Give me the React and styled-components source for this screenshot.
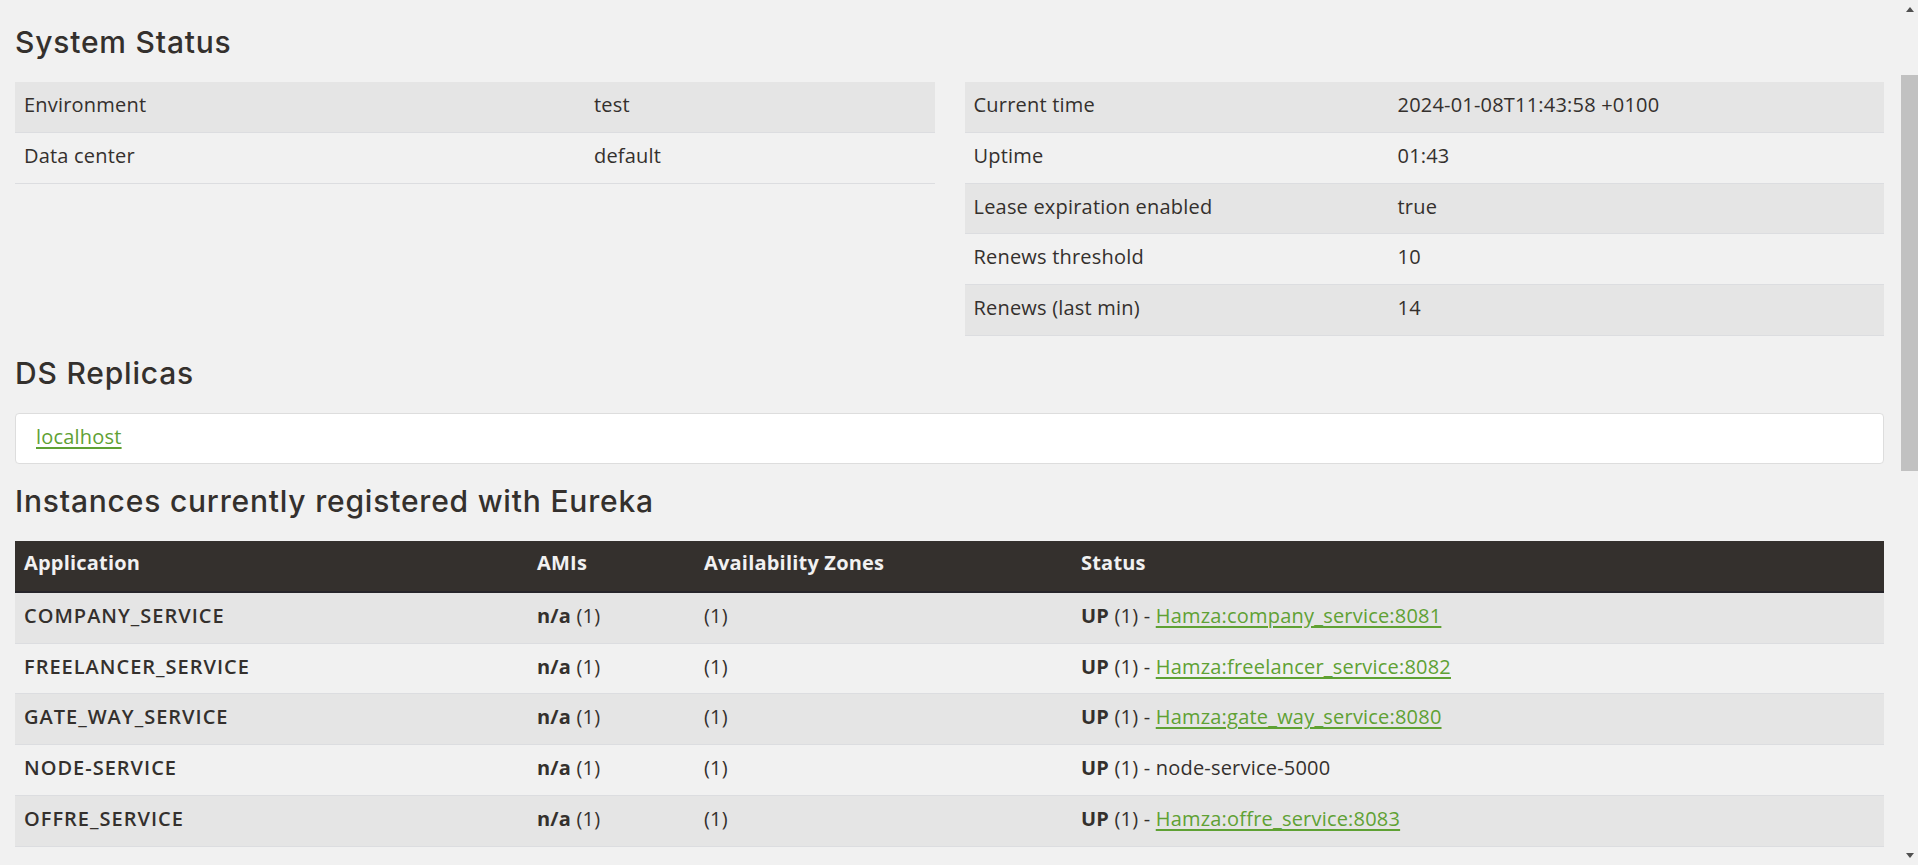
import styled, { createGlobalStyle } from "styled-components";

const systemLeft = [
  ["Environment", "test"],
  ["Data center", "default"],
];

const systemRight = [
  ["Current time", "2024-01-08T11:43:58 +0100"],
  ["Uptime", "01:43"],
  ["Lease expiration enabled", "true"],
  ["Renews threshold", "10"],
  ["Renews (last min)", "14"],
];

const instances = [
  { app: "COMPANY_SERVICE", link: "Hamza:company_service:8081" },
  { app: "FREELANCER_SERVICE", link: "Hamza:freelancer_service:8082" },
  { app: "GATE_WAY_SERVICE", link: "Hamza:gate_way_service:8080" },
  { app: "NODE-SERVICE", text: "node-service-5000" },
  { app: "OFFRE_SERVICE", link: "Hamza:offre_service:8083" },
];

const App = () => {
  return (
    <>
      <GlobalStyle />
      <Page>
        <Main>
          <Title>System Status</Title>
          <Columns>
            <KeyValueTable rows={systemLeft} keyWidth="570px" />
            <KeyValueTable rows={systemRight} keyWidth="424px" />
          </Columns>

          <Title>DS Replicas</Title>
          <ReplicaList>
            <ReplicaItem>
              <Link href="#">localhost</Link>
            </ReplicaItem>
          </ReplicaList>

          <Title>Instances currently registered with Eureka</Title>
          <Table>
            <colgroup>
              <Col $w="513px" />
              <Col $w="167px" />
              <Col $w="377px" />
              <Col />
            </colgroup>
            <thead>
              <tr>
                <HeadCell>Application</HeadCell>
                <HeadCell>AMIs</HeadCell>
                <HeadCell>Availability Zones</HeadCell>
                <HeadCell>Status</HeadCell>
              </tr>
            </thead>
            <tbody>
              {instances.map((it) => (
                <Row key={it.app}>
                  <Cell>
                    <AppName>{it.app}</AppName>
                  </Cell>
                  <Cell>
                    <b>n/a</b> (1)
                  </Cell>
                  <Cell>(1)</Cell>
                  <Cell>
                    <b>UP</b> (1) -{" "}
                    {it.link ? <Link href="#">{it.link}</Link> : it.text}
                  </Cell>
                </Row>
              ))}
            </tbody>
          </Table>
        </Main>

        <Scrollbar aria-hidden="true">
          <ScrollButton>
            <Arrow $dir="up" />
          </ScrollButton>
          <Track>
            <Thumb />
          </Track>
          <ScrollButton>
            <Arrow $dir="down" />
          </ScrollButton>
        </Scrollbar>
      </Page>
    </>
  );
};

const KeyValueTable = ({ rows, keyWidth }) => (
  <Table>
    <colgroup>
      <Col $w={keyWidth} />
      <Col />
    </colgroup>
    <tbody>
      {rows.map(([k, v]) => (
        <Row key={k}>
          <Cell>{k}</Cell>
          <Cell>{v}</Cell>
        </Row>
      ))}
    </tbody>
  </Table>
);

export default App;

const GlobalStyle = createGlobalStyle`
  html, body {
    margin: 0;
    padding: 0;
    background: #f1f1f1;
    overflow: hidden;
  }
`;

const Page = styled.div`
  display: flex;
  height: 100vh;
  overflow: hidden;
  background: #f1f1f1;
  color: #34302d;
  font-family: "Open Sans", "Noto Sans", sans-serif;
  font-size: 20px;
  letter-spacing: 0.2px;
`;

const Main = styled.main`
  flex: 1;
  min-width: 0;
  padding: 5px 17px 0 15px;
`;

const Scrollbar = styled.div`
  width: 17px;
  flex: none;
  display: flex;
  flex-direction: column;
  background: #f1f1f1;
`;

const ScrollButton = styled.div`
  height: 17px;
  flex: none;
  display: flex;
  align-items: center;
  justify-content: center;
`;

const Arrow = styled.span`
  width: 0;
  height: 0;
  border-left: 4.5px solid transparent;
  border-right: 4.5px solid transparent;
  ${(p) =>
    p.$dir === "up"
      ? "border-bottom: 5px solid #505050; margin-top: 2px;"
      : "border-top: 5px solid #505050; margin-top: -2px;"}
`;

const Track = styled.div`
  flex: 1;
  display: flex;
  flex-direction: column;
`;

const Thumb = styled.div`
  margin-top: 58px;
  height: 396px;
  background: #c1c1c1;
`;

const Title = styled.h2`
  margin: 21px 0 23px;
  font-family: "Inter", "Open Sans", sans-serif;
  font-size: 30px;
  font-weight: 500;
  letter-spacing: 0.8px;
  line-height: 33px;
  color: #34302d;
`;

const Columns = styled.div`
  display: grid;
  grid-template-columns: 1fr 1fr;
  gap: 30px;
  align-items: start;
`;

const Table = styled.table`
  width: 100%;
  border-collapse: collapse;
  table-layout: fixed;
`;

const Col = styled.col`
  width: ${(p) => p.$w || "auto"};
`;

const Row = styled.tr`
  &:nth-child(odd) {
    background: #e5e5e5;
  }
`;

const Cell = styled.td`
  padding: 8px 9px 11px;
  line-height: 30.8px;
  border-bottom: 1px solid #dcdde0;
  vertical-align: top;
  text-align: left;

  b {
    font-weight: 700;
  }
`;

const HeadCell = styled.th`
  padding: 7px 9px 12px;
  line-height: 30.8px;
  background: #34302d;
  color: #f1f1f1;
  font-weight: 700;
  text-align: left;
  border-bottom: 2px solid #26252a;
`;

const AppName = styled.span`
  font-weight: 600;
  letter-spacing: 1px;
`;

const ReplicaList = styled.ul`
  margin: 0;
  padding: 0;
  list-style: none;
`;

const ReplicaItem = styled.li`
  padding: 8px 20px 12px;
  line-height: 29px;
  background: #ffffff;
  border: 1px solid #dddddd;
  border-radius: 4px;
`;

const Link = styled.a`
  color: #5fa134;
  text-decoration: underline;
  text-decoration-thickness: 2px;
  text-underline-offset: 3px;
`;
